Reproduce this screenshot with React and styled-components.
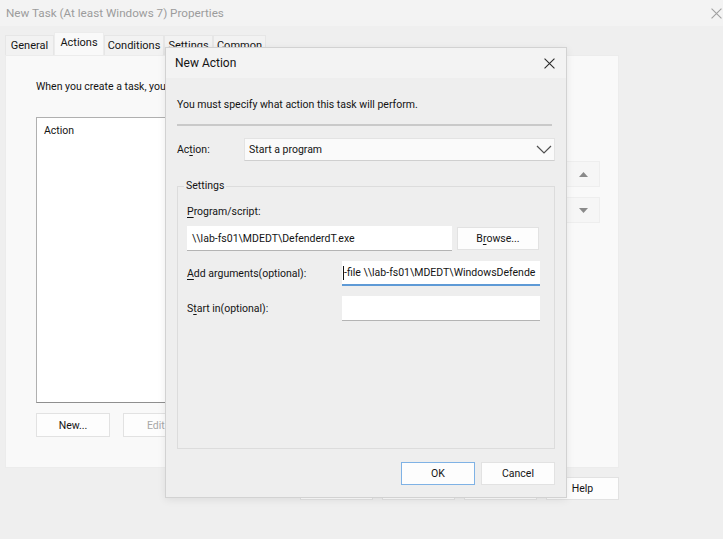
import React from "react";
import styled, { createGlobalStyle } from "styled-components";

const Global = createGlobalStyle`
  body {
    margin: 0;
    background: #efefef;
    font-family: Roboto, "Noto Sans", "Liberation Sans", sans-serif;
    font-size: 10.5px;
    color: #141414;
  }
  * { box-sizing: border-box; }
`;

const Window = styled.div`
  position: relative;
  width: 723px;
  height: 539px;
  overflow: hidden;
  background: #efefef;
`;

const TitleBar = styled.div`
  height: 26px;
  display: flex;
  align-items: center;
  justify-content: space-between;
  padding: 0 1px 0 6px;
  background: #f3f3f3;
  color: #9c9c9c;
  font-size: 11.7px;
  line-height: 16px;
`;

const TabStrip = styled.div`
  display: flex;
  align-items: flex-end;
  height: 29px;
  padding-left: 5px;
`;

const Tab = styled.div`
  height: ${(p) => (p.$active ? "23px" : "20px")};
  width: ${(p) => p.$w}px;
  display: flex;
  align-items: center;
  justify-content: center;
  background: ${(p) => (p.$active ? "#f9f9f9" : "#f2f2f2")};
  border: 1px solid ${(p) => (p.$active ? "#ececec" : "#e6e6e6")};
  border-bottom: none;
  padding-bottom: ${(p) => (p.$active ? "4px" : "0")};
  font-size: 11px;
`;

const Panel = styled.div`
  margin: 0 5px;
  width: 614px;
  height: 413px;
  background: #f9f9f9;
  border: 1px solid #ececec;
  padding: 23px 0 0 30px;
`;

const Line = styled.div`
  line-height: 16px;
  white-space: nowrap;
`;

const ListRow = styled.div`
  display: flex;
  gap: 10px;
  margin-top: 22px;
`;

const ActionList = styled.div`
  width: 520px;
  height: 286px;
  background: #fff;
  border: 1px solid #b0b0b0;
  border-bottom-color: #8f8f8f;
  padding: 5px 7px;
  line-height: 16px;
`;

const ArrowColumn = styled.div`
  display: flex;
  flex-direction: column;
  gap: 10px;
  margin-top: 44px;
`;

const ArrowButton = styled.div`
  width: 34px;
  height: 26px;
  display: flex;
  align-items: center;
  justify-content: center;
  background: #f6f6f6;
  border: 1px solid #eeeeee;
`;

const ButtonRow = styled.div`
  display: flex;
  gap: ${(p) => p.$gap || 9}px;
  justify-content: ${(p) => p.$justify || "flex-start"};
  margin-top: ${(p) => p.$top || 0}px;
  width: ${(p) => (p.$width ? p.$width + "px" : "auto")};
  margin-left: ${(p) => p.$left || 0}px;
`;

const Button = styled.div`
  width: ${(p) => p.$w || 73}px;
  height: ${(p) => p.$h || 23}px;
  display: flex;
  align-items: center;
  justify-content: center;
  background: #fdfdfd;
  border: 1px solid ${(p) => (p.$primary ? "#7fb2e5" : "#e2e2e2")};
  color: ${(p) => (p.$disabled ? "#a8a8a8" : "#141414")};
  flex-shrink: 0;
`;

const Dialog = styled.div`
  position: absolute;
  left: 165px;
  top: 47px;
  width: 402px;
  height: 451px;
  background: #eeeeee;
  border: 1px solid #d2d2d2;
  box-shadow: 0 2px 8px rgba(0, 0, 0, 0.08);
  display: flex;
  flex-direction: column;
`;

const DialogTitle = styled.div`
  height: 30px;
  display: flex;
  align-items: center;
  justify-content: space-between;
  padding: 0 11px 0 9px;
  background: #f3f3f3;
  font-size: 12px;
`;

const DialogBody = styled.div`
  padding: 19px 10px 0 11px;
`;

const Separator = styled.div`
  width: 375px;
  height: 2px;
  background: #c9c9c9;
  margin-top: 11px;
`;

const FieldRow = styled.div`
  display: flex;
  align-items: center;
  margin-top: ${(p) => p.$top || 0}px;
`;

const Label = styled.div`
  width: ${(p) => (p.$w ? p.$w + "px" : "auto")};
  margin-top: ${(p) => p.$top || 0}px;
  line-height: 16px;
  flex-shrink: 0;
`;

const Key = styled.span`
  text-decoration: underline;
  text-underline-offset: 2px;
`;

const Combo = styled.div`
  width: 311px;
  height: 23px;
  display: flex;
  align-items: center;
  justify-content: space-between;
  padding: 0 2px 0 4px;
  background: #fafafa;
  border: 1px solid #e3e3e3;
  border-bottom-color: #cfcfcf;
`;

const Group = styled.fieldset`
  margin: 17px 0 0 0;
  padding: 0 9px;
  width: 378px;
  height: 271px;
  border: 1px solid #dcdcdc;
  min-width: 0;
`;

const Legend = styled.legend`
  padding: 0 2px;
  margin-left: -3px;
  line-height: 16px;
`;

const TextField = styled.div`
  width: ${(p) => p.$w}px;
  height: 25px;
  display: flex;
  align-items: center;
  padding-left: ${(p) => (p.$focus ? "1px" : "5px")};
  background: #fff;
  border-bottom: ${(p) => (p.$focus ? "2px solid #5e9ad6" : "1px solid #b4b4b4")};
  white-space: nowrap;
  overflow: hidden;
  flex-shrink: 0;
`;

const Caret = styled.span`
  display: inline-block;
  width: 1px;
  height: 14px;
  background: #141414;
  flex-shrink: 0;
`;

const CloseIcon = ({ color, size }) => (
  <svg width={size} height={size} viewBox="0 0 10 10">
    <path d="M0.5 0.5 L9.5 9.5 M9.5 0.5 L0.5 9.5" stroke={color} strokeWidth="1" fill="none" />
  </svg>
);

const Chevron = () => (
  <svg width="16" height="9" viewBox="0 0 16 9">
    <path d="M1 1 L8 8 L15 1" stroke="#505050" strokeWidth="1.2" fill="none" />
  </svg>
);

const Triangle = ({ up }) => (
  <svg width="9" height="5" viewBox="0 0 9 5">
    <path d={up ? "M0 5 L4.5 0 L9 5 Z" : "M0 0 L4.5 5 L9 0 Z"} fill="#8a8a8a" />
  </svg>
);

const tabs = [
  { name: "General", w: 49 },
  { name: "Actions", w: 50, active: true },
  { name: "Conditions", w: 60 },
  { name: "Settings", w: 49 },
  { name: "Common", w: 53 },
];

export default function App() {
  return (
    <Window>
      <Global />
      <TitleBar>
        <span>New Task (At least Windows 7) Properties</span>
        <CloseIcon color="#a0a0a0" size={11} />
      </TitleBar>
      <TabStrip>
        {tabs.map((t) => (
          <Tab key={t.name} $w={t.w} $active={t.active}>
            {t.name}
          </Tab>
        ))}
      </TabStrip>
      <Panel>
        <Line>When you create a task, you must specify the action that will occur when your task starts.</Line>
        <ListRow>
          <ActionList>Action</ActionList>
          <ArrowColumn>
            <ArrowButton>
              <Triangle up />
            </ArrowButton>
            <ArrowButton>
              <Triangle />
            </ArrowButton>
          </ArrowColumn>
        </ListRow>
        <ButtonRow $gap={13} $top={10}>
          <Button $w={74} $h={24}>New...</Button>
          <Button $w={74} $h={24} $disabled>Edit...</Button>
          <Button $w={74} $h={24} $disabled>Delete</Button>
        </ButtonRow>
      </Panel>
      <ButtonRow $justify="flex-end" $top={9} $width={614} $left={5}>
        <Button>OK</Button>
        <Button>Cancel</Button>
        <Button>Apply</Button>
        <Button>Help</Button>
      </ButtonRow>

      <Dialog>
        <DialogTitle>
          <span>New Action</span>
          <CloseIcon color="#2a2a2a" size={11} />
        </DialogTitle>
        <DialogBody>
          <Line>You must specify what action this task will perform.</Line>
          <Separator />
          <FieldRow $top={12}>
            <Label $w={67}>
              Ac<Key>t</Key>ion:
            </Label>
            <Combo>
              <span>Start a program</span>
              <Chevron />
            </Combo>
          </FieldRow>
          <Group>
            <Legend>Settings</Legend>
            <Label $top={10}>
              <Key>P</Key>rogram/script:
            </Label>
            <FieldRow $top={6}>
              <TextField $w={265}>\\lab-fs01\MDEDT\DefenderdT.exe</TextField>
              <Button $w={82} $h={23} style={{ marginLeft: 5 }}>
                B<Key>r</Key>owse...
              </Button>
            </FieldRow>
            <FieldRow $top={10}>
              <Label $w={155}>
                <Key>A</Key>dd arguments(optional):
              </Label>
              <TextField $w={198} $focus>
                <Caret />
                -file \\lab-fs01\MDEDT\WindowsDefende
              </TextField>
            </FieldRow>
            <FieldRow $top={10}>
              <Label $w={155}>
                S<Key>t</Key>art in(optional):
              </Label>
              <TextField $w={198}></TextField>
            </FieldRow>
          </Group>
          <ButtonRow $justify="flex-end" $gap={6} $top={13} $width={378}>
            <Button $w={74} $primary>OK</Button>
            <Button $w={74}>Cancel</Button>
          </ButtonRow>
        </DialogBody>
      </Dialog>
    </Window>
  );
}
